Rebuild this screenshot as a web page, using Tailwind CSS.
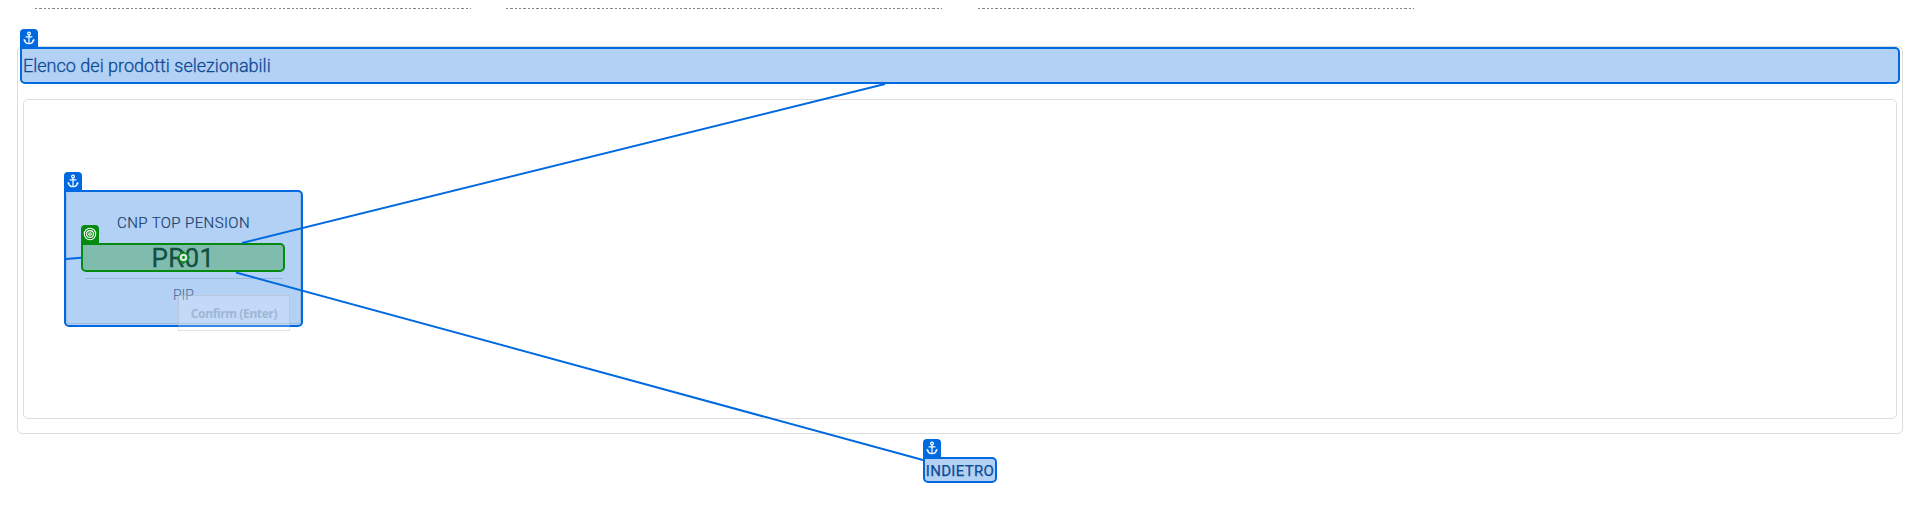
<!DOCTYPE html>
<html lang="it">
<head>
<meta charset="utf-8">
<title>Elenco dei prodotti</title>
<script src="https://cdn.jsdelivr.net/npm/@tailwindcss/browser@4"></script>
</head>
<body class="bg-white font-['Roboto',sans-serif]">
<svg class="hidden">
  <symbol id="anchor" viewBox="0 0 18 18">
    <g fill="none" stroke="#fff" stroke-width="1.2">
      <circle cx="9" cy="4.5" r="1.4"/>
      <path d="M9 6v8.6M5.6 7.8h6.8"/>
      <path d="M4.4 10.6c.3 2.500 2 4 4.600 4s4.300-1.500 4.600-4"/>
    </g>
    <path d="M3.700 12.300v-2.600l2.400 1.800zM14.300 12.300v-2.600l-2.400 1.800z" fill="#fff"/>
  </symbol>
  <symbol id="target" viewBox="0 0 18 18">
    <g fill="none" stroke="#fff" stroke-width="1.1">
      <circle cx="9" cy="9" r="5.700"/><circle cx="9" cy="9" r="3.400"/><circle cx="9" cy="9" r="1.300"/>
    </g>
  </symbol>
</svg>
<main class="relative w-[1920px] h-[510px] overflow-hidden flex flex-col pt-2 px-[17px]">
  <div class="flex gap-[35px] pl-[18px] h-px shrink-0">
    <div class="w-[436px] bg-[repeating-linear-gradient(90deg,#858585_0px,#858585_2.2px,#fff_2.2px,#fff_4.35px)]"></div>
    <div class="w-[436px] bg-[repeating-linear-gradient(90deg,#858585_0px,#858585_2.2px,#fff_2.2px,#fff_4.35px)]"></div>
    <div class="ml-px w-[436px] bg-[repeating-linear-gradient(90deg,#858585_0px,#858585_2.2px,#fff_2.2px,#fff_4.35px)]"></div>
  </div>
  <section class="mt-[37px] h-[388px] shrink-0 w-[1886px] border border-[#dedede] rounded-[5px] px-[2px] flex flex-col">
    <h1 class="relative h-[37px] shrink-0 w-[1880px] border-2 border-[#0069e0] rounded-[5px] rounded-tl-none bg-[#b3d1f5] text-[#0d4a94] flex items-center pl-px text-[18px] font-light">
      <span class="absolute -left-[2px] -top-[20px] size-[18px] bg-[#0069e0] rounded-t-[4px]"><svg class="size-[18px]"><use href="#anchor"/></svg></span>
      <span class="whitespace-nowrap tracking-[0.01px] [-webkit-text-stroke:0.3px_#0d4a94]">Elenco dei prodotti selezionabili</span>
    </h1>
    <div class="mt-[15px] ml-[3px] w-[1874px] h-[320px] shrink-0 border border-[#dedede] rounded-[5px] pt-[90px] pl-[40px]">
      <article class="relative w-[239px] h-[137px] border-2 border-[#0069e0] rounded-[5px] rounded-tl-none bg-[#b3d1f5] flex flex-col items-center pt-[21px]">
        <span class="absolute -left-[2px] -top-[20px] size-[18px] bg-[#0069e0] rounded-t-[4px]"><svg class="size-[18px]"><use href="#anchor"/></svg></span>
        <span class="absolute inset-x-0 top-0 bottom-[1px] border border-t-0 border-[#9dbbdf] rounded-[4px]"></span>
        <div class="h-[20px] leading-[20px] text-[15px] font-light tracking-[0.4px] text-[#173d6c] [-webkit-text-stroke:0.2px_#173d6c] whitespace-nowrap">CNP TOP PENSION</div>
        <div class="relative mt-[10px] -ml-px w-[204px] h-[29px] shrink-0 border-2 border-[#058a10] rounded-[5px] rounded-tl-none bg-[#80bcad] text-[#12503f] flex items-center justify-center text-[26px] leading-[25px]">
          <span class="absolute -left-[2px] -top-[20px] size-[18px] bg-[#058a10] rounded-t-[4px]"><svg class="size-[18px]"><use href="#target"/></svg></span>
          <span class="pt-[2px] tracking-[0.4px] [-webkit-text-stroke:0.3px_#12503f]">PR01</span>
          <svg class="absolute left-[94px] top-[6px] size-[13px]" viewBox="0 0 13 13"><path d="M6.500 0v13M0 6.500h13" stroke="#058a10" stroke-width="1.500"/><circle cx="6.500" cy="6.500" r="4.500" fill="#d7e8dc" stroke="#058a10" stroke-width="1.400"/><circle cx="6.500" cy="6.500" r="1.400" fill="#058a10"/></svg>
        </div>
        <div class="mt-[6px] w-[198px] h-px shrink-0 bg-[#9ab5d6]"></div>
        <div class="mt-[7px] h-[18px] leading-[18px] text-[14px] font-light text-[#406795]">PIP</div>
        <div class="absolute left-[112px] top-[103px] w-[112px] h-[36px] border border-[#9a9a9a]/30 bg-white/20 flex items-center justify-center pt-[2px] font-['Noto_Sans',sans-serif] font-bold text-[12px] tracking-[-0.35px] whitespace-nowrap text-[#9fb7d5]">Confirm (Enter)</div>
      </article>
    </div>
  </section>
  <button class="relative mt-[23px] ml-[906px] w-[74px] h-[26px] shrink-0 border-2 border-[#0069e0] rounded-[5px] rounded-tl-none bg-[#b3d1f5] text-[#0d4a94] flex items-center justify-center text-[15px] leading-[22px]">
    <span class="absolute -left-[2px] -top-[20px] size-[18px] bg-[#0069e0] rounded-t-[4px]"><svg class="size-[18px]"><use href="#anchor"/></svg></span>
    <span class="pt-px tracking-[0.3px] [-webkit-text-stroke:0.25px_#0d4a94]">INDIETRO</span>
  </button>
  <svg class="absolute inset-0 w-[1920px] h-[510px] pointer-events-none" fill="none" stroke="#0069e0" stroke-width="2">
    <path d="M885 84L242 243M236 272.500L923 460M66 259L81 257.800"/>
  </svg>
</main>
</body>
</html>
